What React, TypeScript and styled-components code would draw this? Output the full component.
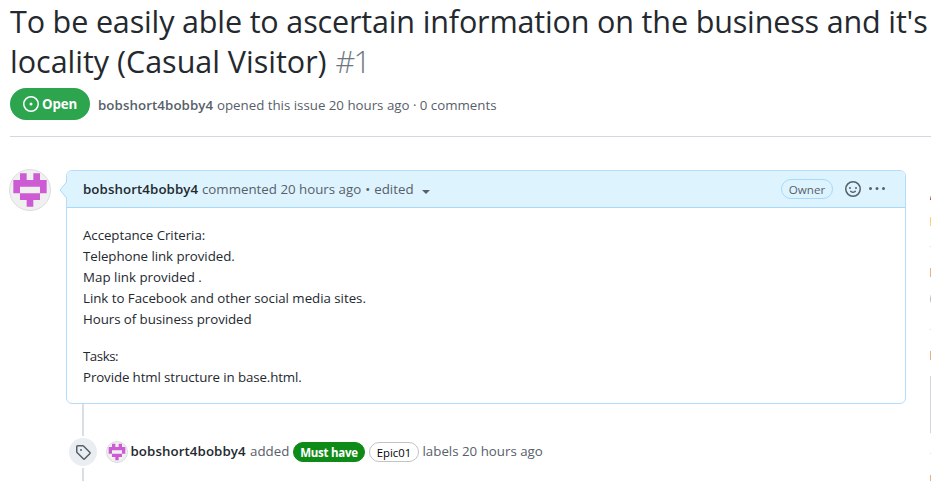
import React from "react";
import styled, { createGlobalStyle } from "styled-components";

const GlobalStyle = createGlobalStyle`
  *, *::before, *::after { box-sizing: border-box; }
  body {
    margin: 0;
    background: #fff;
    color: #24292f;
    font-family: "Open Sans", "Noto Sans", sans-serif;
    font-size: 13.3px;
    line-height: 21px;
    overflow: hidden;
  }
  h1, p { margin: 0; }
  svg { display: block; flex: none; }
`;

const Page = styled.main`
  height: 481px;
  padding: 1px 0 0 10px;
  overflow: hidden;
`;

const Title = styled.h1`
  font-size: 30.5px;
  font-weight: 400;
  line-height: 40px;
  white-space: nowrap;
`;

const TitleLine = styled.span<{ $spacing: number }>`
  display: block;
  letter-spacing: ${(p) => p.$spacing}px;
`;

const IssueNumber = styled.span`
  margin-left: 1px;
  color: #6e7781;
  font-weight: 300;
  letter-spacing: -1.6px;
`;

const Meta = styled.div`
  display: flex;
  align-items: flex-start;
  height: 49px;
  margin: 7px 0 32px;
  border-bottom: 1px solid #d3d9df;
`;

const State = styled.span`
  display: flex;
  align-items: center;
  gap: 3px;
  width: 80px;
  height: 32px;
  padding-left: 13px;
  margin-right: 8px;
  border-radius: 16px;
  background: #2da44e;
  color: #fff;
  font-weight: 700;
  letter-spacing: -0.1px;
`;

const Line = styled.p`
  display: flex;
  align-items: baseline;
  gap: 4px;
  color: #57606a;
  white-space: nowrap;
`;

const MetaLine = styled(Line)`
  margin-top: 7px;
  letter-spacing: -0.01px;
`;

const Author = styled.strong<{ $muted?: boolean }>`
  display: inline-block;
  width: 115px;
  color: ${(p) => (p.$muted ? "#57606a" : "#24292f")};
  font-weight: 600;
  letter-spacing: 0.08px;
`;

const Columns = styled.div`
  display: flex;
  align-items: flex-start;
`;

const AvatarFrame = styled.span<{ $size: number }>`
  display: block;
  flex: none;
  width: ${(p) => p.$size}px;
  height: ${(p) => p.$size}px;
  border: 1px solid #dcdde0;
  border-radius: 50%;
  overflow: hidden;
  background: #f0f0f0;
`;

const AvatarColumn = styled.div`
  width: 56px;
  margin-left: -1px;
`;

const Thread = styled.section`
  width: 841px;
  padding-left: 1px;
`;

const Comment = styled.article`
  position: relative;
  width: 840px;
  height: 234px;
  margin-top: 1px;
  border: 1px solid #b6dcfb;
  border-radius: 6px;
`;

const Pointer = styled.svg`
  position: absolute;
  left: -8px;
  top: 10px;
`;

const CommentHeader = styled.header`
  display: flex;
  align-items: center;
  height: 37px;
  padding: 0 20px 0 16px;
  border-bottom: 1px solid #a8d8fb;
  border-radius: 5px 5px 0 0;
  background: #ddf4ff;
`;

const Caret = styled.span`
  align-self: center;
  margin: 5px 0 0 4px;
  border: 4px solid transparent;
  border-top-color: #57606a;
  border-bottom: 0;
`;

const Actions = styled.div`
  display: flex;
  align-items: center;
  margin-left: auto;
  color: #57606a;
`;

const Owner = styled.span`
  display: flex;
  align-items: center;
  justify-content: center;
  width: 52px;
  height: 20px;
  margin-right: 12px;
  border: 1px solid #a8d8fb;
  border-radius: 10px;
  font-size: 11.6px;
  font-weight: 500;
`;

const MoreButton = styled.span`
  margin-left: 8px;
`;

const CommentBody = styled.div`
  padding: 17px 16px 15px;
`;

const Paragraph = styled.p`
  margin-bottom: 16px;
  white-space: nowrap;
`;

const BodyLine = styled.span<{ $spacing?: number }>`
  display: block;
  letter-spacing: ${(p) => p.$spacing ?? -0.06}px;
`;

const Timeline = styled.div`
  display: grid;
  grid-template-columns: 34px auto;
  align-items: center;
  column-gap: 6px;
`;

const Rail = styled.div`
  display: flex;
  flex-direction: column;
  align-items: center;
  height: 77px;
`;

const RailSegment = styled.span<{ $height: number }>`
  width: 2px;
  height: ${(p) => p.$height}px;
  background: #d8dee4;
`;

const TagBadge = styled.span`
  display: flex;
  align-items: center;
  justify-content: center;
  width: 28px;
  height: 28px;
  margin: 2px 0;
  border-radius: 50%;
  background: #eaeef2;
  color: #57606a;
`;

const Event = styled.div`
  display: flex;
  align-items: center;
  margin-top: 19px;
  color: #57606a;
  white-space: nowrap;
`;

const EventText = styled.span<{ $left: number; $width?: number }>`
  margin: -2px 0 0 ${(p) => p.$left}px;
  width: ${(p) => (p.$width ? `${p.$width}px` : "auto")};
`;

const Label = styled.span<{ $solid?: boolean }>`
  display: flex;
  align-items: center;
  justify-content: center;
  width: ${(p) => (p.$solid ? 72 : 50)}px;
  height: 20px;
  margin-right: 4px;
  padding-top: 1px;
  border: 1px solid ${(p) => (p.$solid ? "#0e8a16" : "#c3c3c3")};
  border-radius: 10px;
  background: ${(p) => (p.$solid ? "#0e8a16" : "#fff")};
  color: ${(p) => (p.$solid ? "#fff" : "#000")};
  font-size: ${(p) => (p.$solid ? 11.5 : 11.3)}px;
  font-weight: ${(p) => (p.$solid ? 700 : 500)};
  letter-spacing: ${(p) => (p.$solid ? -0.25 : 0)}px;
`;

const Sidebar = styled.aside`
  display: flex;
  flex-direction: column;
  width: 1px;
  margin-left: 24px;
  padding-top: 27px;
`;

const Mark = styled.span<{ $height: number; $color: string; $gap: number }>`
  flex: none;
  height: ${(p) => p.$height}px;
  margin-bottom: ${(p) => p.$gap}px;
  background: ${(p) => p.$color};
`;

const MARKS = [
  { height: 4, color: "linear-gradient(#f5c9a3, #8c4a3c)", gap: 17 },
  { height: 9, color: "#fdd07c", gap: 20 },
  { height: 1, color: "#d8dee4", gap: 21 },
  { height: 9, color: "#efb078", gap: 18 },
  { height: 8, color: "linear-gradient(#eee, #b5b5b5, #eee)", gap: 26 },
  { height: 1, color: "#d8dee4", gap: 21 },
  { height: 9, color: "#efb078", gap: 16 },
  { height: 57, color: "#d0d7de", gap: 20 },
  { height: 1, color: "#d8dee4", gap: 21 },
  { height: 6, color: "#efb078", gap: 0 },
];

const ICONS = {
  open: "M8 9.5a1.5 1.5 0 100-3 1.5 1.5 0 000 3zM8 0a8 8 0 100 16A8 8 0 008 0zM1.5 8a6.5 6.5 0 1113 0 6.5 6.5 0 01-13 0z",
  tag: "M2.5 7.775V2.75a.25.25 0 01.25-.25h5.025a.25.25 0 01.177.073l6.25 6.25a.25.25 0 010 .354l-5.025 5.025a.25.25 0 01-.354 0l-6.25-6.25a.25.25 0 01-.073-.177zm-1.5 0V2.75C1 1.784 1.784 1 2.75 1h5.025c.464 0 .91.184 1.238.513l6.25 6.25a1.75 1.75 0 010 2.474l-5.026 5.026a1.75 1.75 0 01-2.474 0l-6.25-6.25A1.75 1.75 0 011 7.775zM6 5a1 1 0 100 2 1 1 0 000-2z",
  smiley:
    "M1.5 8a6.5 6.5 0 1113 0 6.5 6.5 0 01-13 0zM8 0a8 8 0 100 16A8 8 0 008 0zM5 8a1 1 0 100-2 1 1 0 000 2zm7-1a1 1 0 11-2 0 1 1 0 012 0zM5.32 9.636a.75.75 0 011.038.175l.007.009c.103.118.22.222.35.31.264.178.683.37 1.285.37.602 0 1.02-.192 1.285-.371.13-.088.247-.192.35-.31l.007-.008a.75.75 0 111.222.87c-.05.08-.12.16-.204.237-.16.166-.338.316-.53.445-.63.418-1.37.638-2.127.629-.946 0-1.652-.308-2.126-.63a3.331 3.331 0 01-.715-.657.75.75 0 01.183-1.044z",
  more: "M8 9a1.5 1.5 0 100-3 1.5 1.5 0 000 3zM1.5 9a1.5 1.5 0 100-3 1.5 1.5 0 000 3zm13 0a1.5 1.5 0 100-3 1.5 1.5 0 000 3z",
};

const Icon = ({ name }: { name: keyof typeof ICONS }) => (
  <svg width="16" height="16" viewBox="0 0 16 16" fill="currentColor">
    <path fillRule="evenodd" d={ICONS[name]} />
  </svg>
);

const Avatar = ({ size }: { size: number }) => (
  <AvatarFrame $size={size}>
    <svg width={size - 2} height={size - 2} viewBox="0 0 12 12">
      <path
        fill="#cd5bd3"
        d="M3 1h2v2h2V1h2v2h2v4H9v2H7v2H5V9H3V7H1V3h2zM3 5v2h6V5z"
        fillRule="evenodd"
      />
    </svg>
  </AvatarFrame>
);

export default function App() {
  return (
    <Page>
      <GlobalStyle />
      <Title>
        <TitleLine $spacing={-0.15}>
          To be easily able to ascertain information on the business and it's
        </TitleLine>
        <TitleLine $spacing={-0.01}>
          locality (Casual Visitor) <IssueNumber>#1</IssueNumber>
        </TitleLine>
      </Title>
      <Meta>
        <State>
          <Icon name="open" />
          Open
        </State>
        <MetaLine>
          <Author $muted>bobshort4bobby4</Author>
          <span>opened this issue 20 hours ago · 0 comments</span>
        </MetaLine>
      </Meta>
      <Columns>
        <AvatarColumn>
          <Avatar size={42} />
        </AvatarColumn>
        <Thread>
          <Comment>
            <CommentHeader>
              <Line>
                <Author>bobshort4bobby4</Author>
                <span>commented 20 hours ago</span>
                <span>•</span>
                <span>edited</span>
                <Caret />
              </Line>
              <Actions>
                <Owner>Owner</Owner>
                <Icon name="smiley" />
                <MoreButton>
                  <Icon name="more" />
                </MoreButton>
              </Actions>
            </CommentHeader>
            <Pointer width="8" height="18" viewBox="0 0 8 18">
              <path d="M8 1L1 9l7 8z" fill="#ddf4ff" />
              <path d="M7.5 1L1 9l6.5 8" fill="none" stroke="#a8d8fb" />
            </Pointer>
            <CommentBody>
              <Paragraph>
                <BodyLine>Acceptance Criteria:</BodyLine>
                <BodyLine>Telephone link provided.</BodyLine>
                <BodyLine $spacing={0.02}>Map link provided .</BodyLine>
                <BodyLine $spacing={-0.03}>
                  Link to Facebook and other social media sites.
                </BodyLine>
                <BodyLine>Hours of business provided</BodyLine>
              </Paragraph>
              <Paragraph>
                <BodyLine $spacing={-0.45}>Tasks:</BodyLine>
                <BodyLine $spacing={-0.11}>
                  Provide html structure in base.html.
                </BodyLine>
              </Paragraph>
            </CommentBody>
          </Comment>
          <Timeline>
            <Rail>
              <RailSegment $height={32} />
              <TagBadge>
                <Icon name="tag" />
              </TagBadge>
              <RailSegment $height={13} />
            </Rail>
            <Event>
              <Avatar size={22} />
              <EventText $left={2.5}>
                <Author>bobshort4bobby4</Author>
              </EventText>
              <EventText $left={4.5} $width={43}>
                added
              </EventText>
              <Label $solid>Must have</Label>
              <Label>Epic01</Label>
              <EventText $left={-0.5}>labels 20 hours ago</EventText>
            </Event>
          </Timeline>
        </Thread>
        <Sidebar>
          {MARKS.map((m, i) => (
            <Mark key={i} $height={m.height} $color={m.color} $gap={m.gap} />
          ))}
        </Sidebar>
      </Columns>
    </Page>
  );
}
